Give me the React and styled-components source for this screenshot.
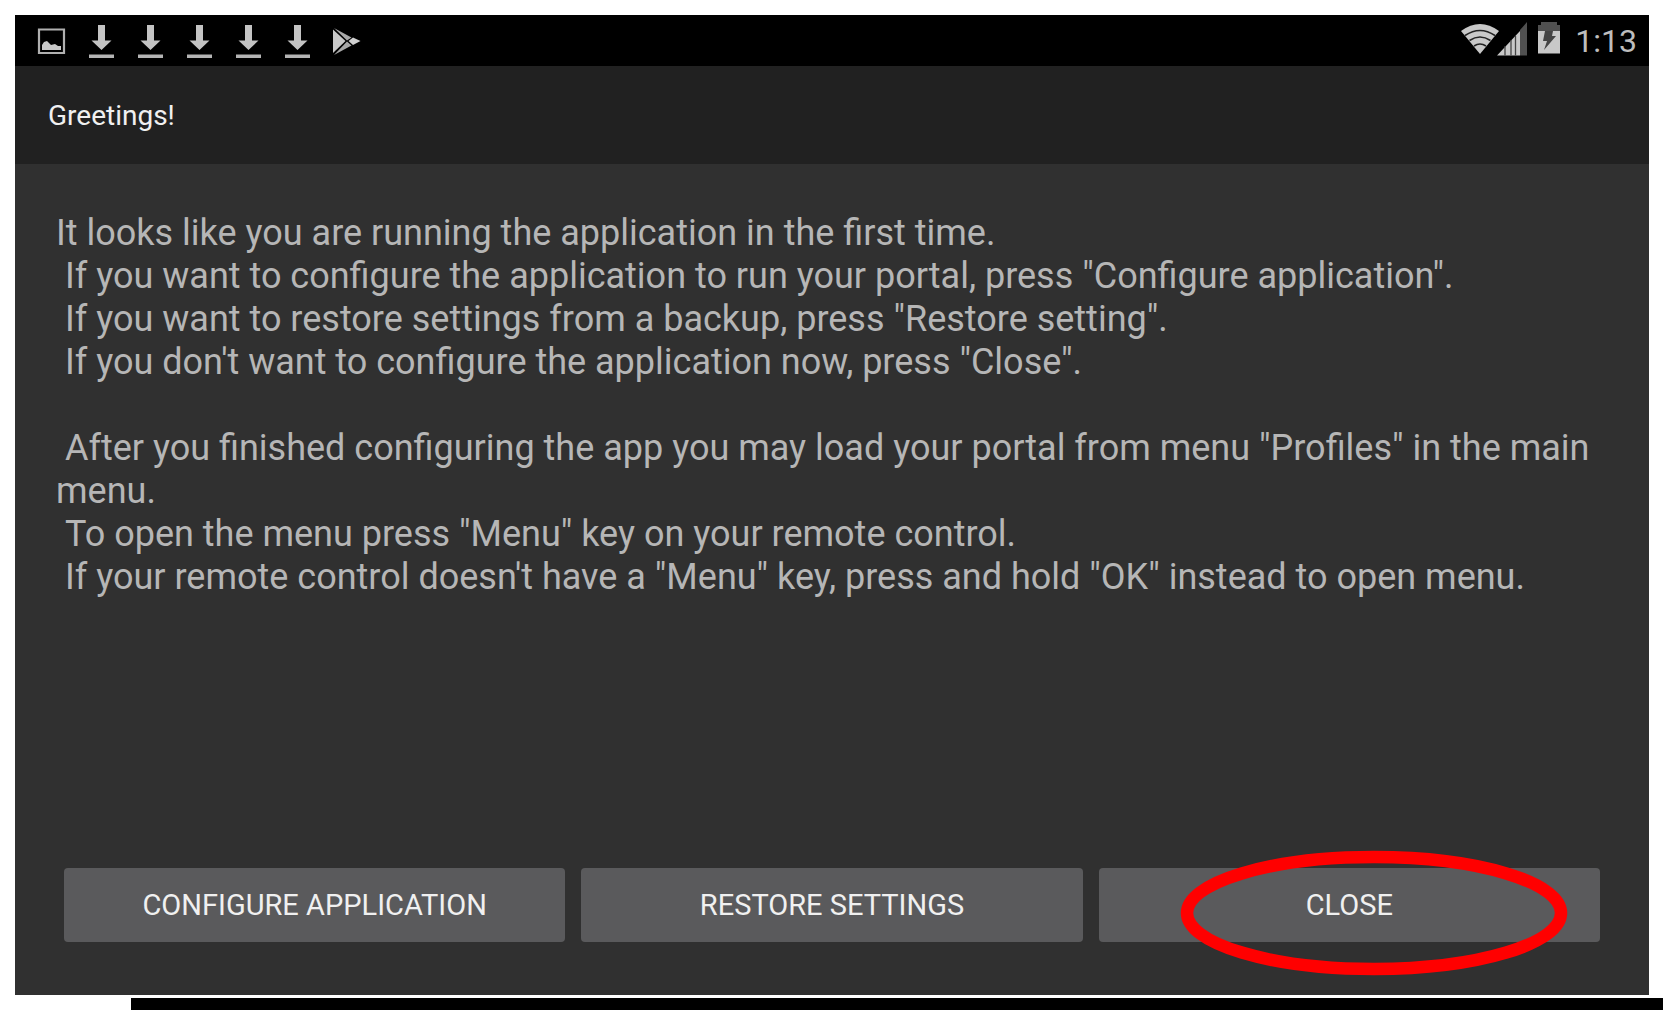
import React from "react";
import styled, { createGlobalStyle } from "styled-components";

const GlobalStyle = createGlobalStyle`
  * { box-sizing: border-box; }
  body { margin: 0; background: #fff; font-family: Roboto, sans-serif; }
`;

const Page = styled.div`
  min-height: 100vh;
  display: flex;
  flex-direction: column;
`;

const Screen = styled.main`
  flex: 1;
  display: flex;
  flex-direction: column;
  margin: 15px 14px 3px 15px;
  background: #303030;
`;

const StatusBar = styled.header`
  display: flex;
  justify-content: space-between;
  align-items: center;
  height: 51px;
  padding: 0 12px 0 23px;
  background: #000;
  color: #bdbdbd;
`;

const Notifications = styled.div`
  display: flex;
  gap: 13px;
`;

const SystemTray = styled.div`
  display: flex;
  align-items: center;
`;

const Glyph = styled.svg`
  display: block;
  flex: none;
  width: ${(p) => p.$w}px;
  height: 37px;
  overflow: visible;
`;

const Clock = styled.time`
  margin-left: 12px;
  font-size: 32px;
  line-height: 36px;
`;

const TitleBar = styled.div`
  padding: 34px 33px 32px;
  background: #212121;
`;

const Title = styled.h1`
  margin: 0;
  font-size: 28px;
  line-height: 32px;
  font-weight: 400;
  color: #f0f0f0;
`;

const Body = styled.section`
  flex: 1;
  display: flex;
  flex-direction: column;
  justify-content: space-between;
  padding: 48px 49px 53px 41px;
`;

const Message = styled.p`
  margin: 0;
  font-size: 36px;
  line-height: 43px;
  color: #b6b6b6;
  white-space: pre-wrap;
`;

const Actions = styled.div`
  display: grid;
  grid-template-columns: repeat(3, 1fr);
  gap: 16px;
  padding-left: 8px;
`;

const Action = styled.div`
  position: relative;
  display: grid;
`;

const Button = styled.button`
  height: 74px;
  border: 0;
  border-radius: 4px;
  background: #5a5a5c;
  color: #f0f0f0;
  font-family: inherit;
  font-size: 29px;
  line-height: 32px;
  text-transform: uppercase;
`;

const Highlight = styled.svg`
  position: absolute;
  top: -17px;
  left: 16.5%;
  width: 77%;
  height: 124px;
  overflow: visible;
  pointer-events: none;

  ellipse {
    rx: calc(50% - 6px);
    ry: calc(50% - 6px);
    fill: none;
    stroke: #f00;
    stroke-width: 12.5px;
  }
`;

const BottomStrip = styled.footer`
  height: 12px;
  margin-left: 131px;
  background: #000;
`;

const PictureIcon = () => (
  <Glyph $w={32} viewBox="0 0 32 37" aria-hidden="true">
    <path d="M1 7.500h25v23.500H1z" fill="none" stroke="#b0b0b0" strokeWidth="2.200" />
    <path d="M4 28v-5l2-3 3-1 4 4 4-1 3 2 3 0v4z" fill="#c8c8c8" />
  </Glyph>
);

const DownloadIcon = () => (
  <Glyph $w={36} viewBox="0 0 36 37" aria-hidden="true">
    <path d="M15 3h7v15.500h6.500L18.500 28 8.500 18.500H15z" fill="#c4c4c4" />
    <path d="M6 32.500h25v3.500H6z" fill="#b4b4b4" />
  </Glyph>
);

const PlayIcon = () => (
  <Glyph $w={36} viewBox="0 0 36 37" aria-hidden="true">
    <path d="M5 7.500v23.500l12.500-12z" fill="#c8c8c8" />
    <path d="M6 6l17.500 9.500-4.500 3zM6 33l17.500-9.500-4.500-4z" fill="#a8a8a8" />
    <path d="M25 15.500l7.500 3.500-7.500 4-4.500-4z" fill="#d0d0d0" />
  </Glyph>
);

const WifiIcon = () => (
  <Glyph $w={36} viewBox="0 0 36 37" aria-hidden="true">
    <path d="M0 9Q19-5 38 9L19 32z" fill="#c8c8c8" />
    <path d="M4 13.500q15-10 30 0M8.500 18.500q10.500-7 21 0M13 24q6-4 12 0" fill="none" stroke="#222" strokeWidth="1.600" />
  </Glyph>
);

const SignalIcon = () => (
  <Glyph $w={32} viewBox="0 0 32 37" aria-hidden="true">
    <path d="M0 33.500L23 9v24.500z" fill="#c8c8c8" />
    <path d="M23 8l7-8v33.500h-7z" fill="#505050" />
    <path d="M8 24v9.500M14 18v15.500M18.500 14v19.500" stroke="#444" strokeWidth="1.300" />
  </Glyph>
);

const BatteryIcon = () => (
  <Glyph $w={34} viewBox="0 0 34 37" aria-hidden="true">
    <path d="M9 9V3h3V0h16v3h3v6z" fill="#505050" />
    <path d="M9 9h22v22.500H9z" fill="#c8c8c8" />
    <path d="M16 9h8l-1 5h4L15 28l3-9h-4z" fill="#444" />
  </Glyph>
);

const MESSAGE = [
  "It looks like you are running the application in the first time.",
  " If you want to configure the application to run your portal, press \"Configure application\".",
  " If you want to restore settings from a backup, press \"Restore setting\".",
  " If you don't want to configure the application now, press \"Close\".",
  "",
  " After you finished configuring the app you may load your portal from menu \"Profiles\" in the main menu.",
  " To open the menu press \"Menu\" key on your remote control.",
  " If your remote control doesn't have a \"Menu\" key, press and hold \"OK\" instead to open menu.",
].join("\n");

export default function App() {
  return (
    <Page>
      <GlobalStyle />
      <Screen>
        <StatusBar>
          <Notifications>
            <PictureIcon />
            {[0, 1, 2, 3, 4].map((n) => (
              <DownloadIcon key={n} />
            ))}
            <PlayIcon />
          </Notifications>
          <SystemTray>
            <WifiIcon />
            <SignalIcon />
            <BatteryIcon />
            <Clock>1:13</Clock>
          </SystemTray>
        </StatusBar>
        <TitleBar>
          <Title>Greetings!</Title>
        </TitleBar>
        <Body>
          <Message>{MESSAGE}</Message>
          <Actions>
            <Action>
              <Button type="button">Configure application</Button>
            </Action>
            <Action>
              <Button type="button">Restore settings</Button>
            </Action>
            <Action>
              <Button type="button">Close</Button>
              <Highlight aria-hidden="true">
                <ellipse cx="50%" cy="50%" />
              </Highlight>
            </Action>
          </Actions>
        </Body>
      </Screen>
      <BottomStrip />
    </Page>
  );
}
